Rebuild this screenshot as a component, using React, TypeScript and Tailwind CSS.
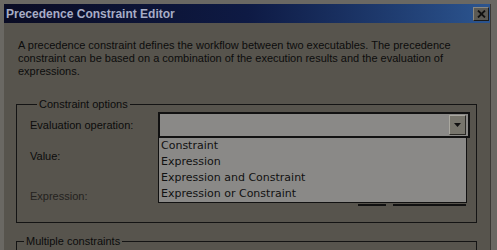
const items = ["Constraint", "Expression", "Expression and Constraint", "Expression or Constraint"];

export default function App() {
  return (
    <div className="w-[497px] h-[250px] overflow-hidden bg-[#6a6863] pl-[4px] pt-[4px] pr-[6px] font-['Liberation_Sans',sans-serif] text-[11px] text-[#0c0c0c]">
      <div className="flex h-full flex-col border-r border-[#3a3834]">
        {/* title bar */}
        <div className="flex h-[19px] shrink-0 items-center justify-between bg-gradient-to-r from-[#0a0c24] via-[#0e1a44] to-[#2c5590] pl-[2px] pr-[1px]">
          <span className="text-[12px] font-bold text-[#a7adc6]">Precedence Constraint Editor</span>
          <button className="flex h-[14px] w-[16px] items-center justify-center border border-t-[#8a8880] border-l-[#8a8880] border-r-[#1a1a1a] border-b-[#1a1a1a] bg-[#5c5a54]">
            <svg width="9" height="8" viewBox="0 0 9 8">
              <path d="M1 0.5 L8 7.5 M8 0.5 L1 7.5" stroke="#111" strokeWidth="1.8" />
            </svg>
          </button>
        </div>

        {/* body */}
        <div className="flex flex-1 flex-col bg-[#57544d] pl-[12px] pr-[13px]">
          <p className="mt-[16px] pl-[2px] pr-[20px] leading-[13px]">
            A precedence constraint defines the workflow between two executables. The precedence constraint can be based on a combination of the execution results and the evaluation of expressions.
          </p>

          <fieldset className="mt-[20px] h-[125px] border border-[#141414] pl-[13px] pr-[6px]">
            <legend className="ml-[7px] px-[2px] leading-[13px]">Constraint options</legend>
            <div className="relative mt-[1px] flex items-center">
              <span className="w-[128px]">Evaluation operation:</span>
              <div className="flex h-[26px] flex-1 items-center justify-end border-2 border-[#111] bg-[#8a8987] pr-[2px]">
                <div className="flex h-[20px] w-[17px] items-center justify-center border border-t-[#a9a79f] border-l-[#a9a79f] border-r-[#2a2925] border-b-[#2a2925] bg-[#77756c]">
                  <svg width="7" height="4" viewBox="0 0 7 4">
                    <path d="M0 0 H7 L3.5 4 Z" fill="#111" />
                  </svg>
                </div>
              </div>

              {/* open dropdown list */}
              <div className="absolute left-[128px] right-[3px] top-[25px] z-10 border border-[#111] bg-[#8a8987] font-['DejaVu_Sans',sans-serif] text-[11px] leading-[16px] text-[#111]">
                {items.map((item) => (
                  <div key={item} className="pl-[2px]">{item}</div>
                ))}
              </div>
            </div>

            <div className="mt-[12px] leading-[13px]">Value:</div>

            <div className="mt-[22px] flex h-[22px] items-center">
              <span className="w-[128px] text-[#24221e]">Expression:</span>
              <div className="ml-[200px] h-[20px] w-[28px] border-b-2 border-[#111]" />
              <div className="ml-[7px] h-[20px] w-[73px] border-b-2 border-[#111]" />
            </div>
          </fieldset>

          <fieldset className="mt-[12px] h-[40px] border border-[#141414]">
            <legend className="ml-[7px] px-[2px] leading-[13px]">Multiple constraints</legend>
          </fieldset>
        </div>
      </div>
    </div>
  );
}
